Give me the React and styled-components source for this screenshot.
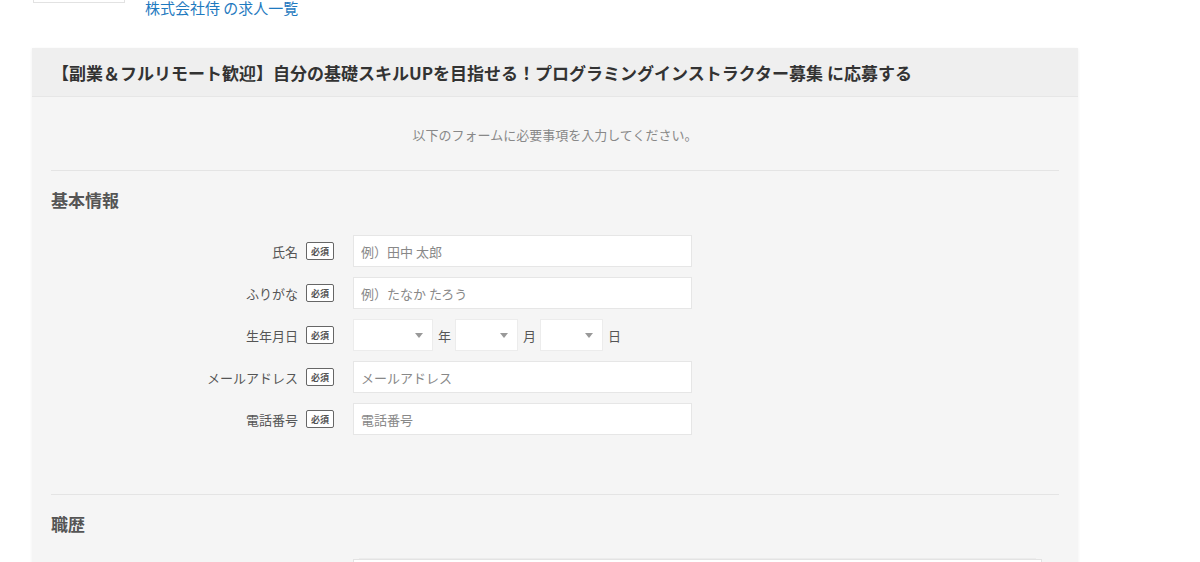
import React from "react";
import styled, { createGlobalStyle } from "styled-components";

const GlobalStyle = createGlobalStyle`
  body {
    margin: 0;
    background: #fff;
    font-family: "Noto Sans CJK JP", "Noto Sans", sans-serif;
    color: #333;
  }
`;

const Page = styled.div`
  width: 1200px;
  height: 562px;
  overflow: hidden;
`;

const TopRow = styled.div`
  display: flex;
  align-items: flex-start;
  height: 16px;
  padding-left: 33px;
`;

const LogoBox = styled.div`
  width: 92px;
  height: 60px;
  margin-top: -57px;
  border: 1px solid #e2e2e2;
  background: #fff;
  box-sizing: border-box;
`;

const CompanyLink = styled.a`
  margin-left: 20px;
  font-size: 15px;
  line-height: 16px;
  color: #1f7ac0;
  text-decoration: none;
`;

const Panel = styled.section`
  margin: 32px 0 0 32px;
  width: 1046px;
  background: #f5f5f5;
  box-shadow: 0 1px 3px rgba(0, 0, 0, 0.07);
`;

const PanelHeader = styled.h1`
  margin: 0;
  height: 48px;
  display: flex;
  align-items: center;
  padding-left: 20px;
  background: #efefef;
  border-bottom: 1px solid #e6e6e6;
  font-size: 17px;
  font-weight: 700;
  color: #333;
`;

const PanelBody = styled.div`
  padding: 0 19px 40px;
`;

const Intro = styled.p`
  margin: 0;
  padding: 28px 0 25px;
  text-align: center;
  font-size: 13px;
  line-height: 20px;
  color: #888;
  border-bottom: 1px solid #e4e4e4;
`;

const Section = styled.div`
  padding-bottom: ${(p) => p.$bottom || 0}px;
  border-bottom: ${(p) => (p.$divider ? "1px solid #e4e4e4" : "none")};
`;

const SectionTitle = styled.h2`
  margin: 0;
  padding: 17px 0 23px;
  font-size: 17px;
  line-height: 24px;
  font-weight: 700;
  color: #555;
`;

const Rows = styled.div`
  display: flex;
  flex-direction: column;
  gap: 10px;
`;

const Row = styled.div`
  display: grid;
  grid-template-columns: 247px 28px 1fr;
  column-gap: 8px;
  align-items: center;
`;

const Label = styled.span`
  text-align: right;
  font-size: 13px;
  color: #555;
`;

const Badge = styled.span`
  display: flex;
  align-items: center;
  justify-content: center;
  width: 28px;
  height: 18px;
  box-sizing: border-box;
  border: 1px solid #666;
  border-radius: 2px;
  font-size: 9px;
  font-weight: 700;
  color: #555;
  background: #fff;
`;

const Field = styled.div`
  margin-left: 11px;
  display: flex;
  align-items: center;
  gap: 4px;
`;

const Input = styled.input`
  width: ${(p) => p.$width || 339}px;
  height: 32px;
  box-sizing: border-box;
  border: 1px solid #e6e6e6;
  background: #fff;
  padding: 0 7px;
  font-family: inherit;
  font-size: 13px;
  color: #333;
  outline: none;
  &::placeholder {
    color: #888;
  }
`;

const Select = styled.div`
  position: relative;
  width: ${(p) => p.$width}px;
  height: 32px;
  box-sizing: border-box;
  border: 1px solid #ececec;
  background: #fff;
  &::after {
    content: "";
    position: absolute;
    right: 9px;
    top: 13px;
    border-left: 4.5px solid transparent;
    border-right: 4.5px solid transparent;
    border-top: 5px solid #999;
  }
`;

const Unit = styled.span`
  font-size: 13px;
  color: #555;
  margin-left: 1px;
`;

const CareerBox = styled.div`
  margin: 0 0 0 302px;
  height: 80px;
  border: 1px solid #e3e3e3;
  background: #fff;
  width: 687px;
  box-shadow: 0 -7px 0 -6px #ececec;
`;

const fields = [
  { label: "氏名", placeholder: "例）田中 太郎" },
  { label: "ふりがな", placeholder: "例）たなか たろう" },
  { label: "生年月日", date: true },
  { label: "メールアドレス", placeholder: "メールアドレス" },
  { label: "電話番号", placeholder: "電話番号" },
];

export default function App() {
  return (
    <Page>
      <GlobalStyle />
      <TopRow>
        <LogoBox />
        <CompanyLink href="#">株式会社侍 の求人一覧</CompanyLink>
      </TopRow>
      <Panel>
        <PanelHeader>
          【副業＆フルリモート歓迎】自分の基礎スキルUPを目指せる！プログラミングインストラクター募集 に応募する
        </PanelHeader>
        <PanelBody>
          <Intro>以下のフォームに必要事項を入力してください。</Intro>
          <Section $divider $bottom={59}>
            <SectionTitle>基本情報</SectionTitle>
            <Rows>
              {fields.map((f) => (
                <Row key={f.label}>
                  <Label>{f.label}</Label>
                  <Badge>必須</Badge>
                  <Field>
                    {f.date ? (
                      <>
                        <Select $width={80} />
                        <Unit>年</Unit>
                        <Select $width={63} />
                        <Unit>月</Unit>
                        <Select $width={63} />
                        <Unit>日</Unit>
                      </>
                    ) : (
                      <Input placeholder={f.placeholder} />
                    )}
                  </Field>
                </Row>
              ))}
            </Rows>
          </Section>
          <Section>
            <SectionTitle>職歴</SectionTitle>
            <CareerBox />
          </Section>
        </PanelBody>
      </Panel>
    </Page>
  );
}
